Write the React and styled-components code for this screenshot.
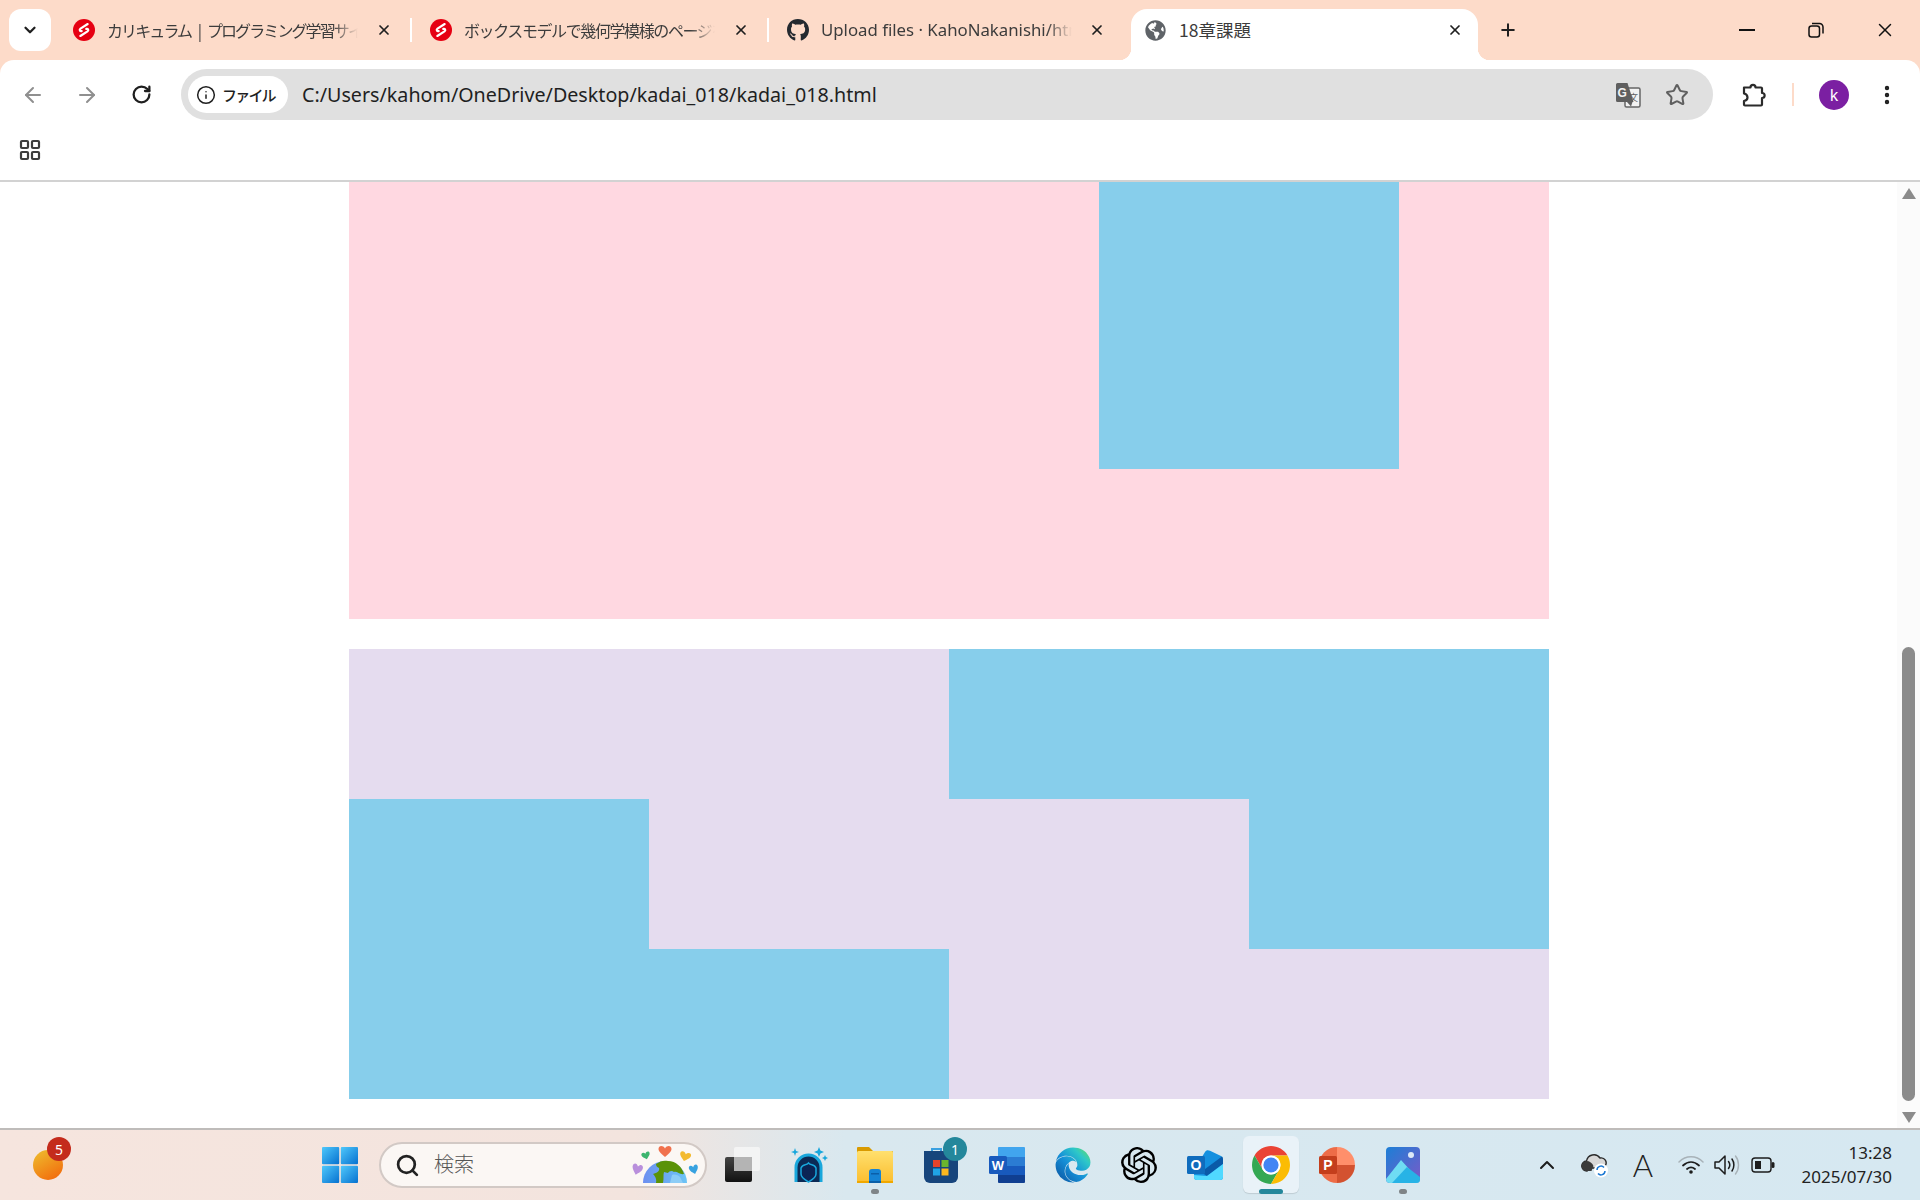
import React from "react";
import styled, { createGlobalStyle } from "styled-components";
import { ArrowLeft, ArrowRight, ChevronDown, ChevronUp, Info, LayoutGrid, MoreVertical, Plus, RotateCw, Search, Star, X } from "lucide-react";
import { FaEdge, FaGithub, FaGlobeAmericas } from "react-icons/fa";
import { SiOpenai } from "react-icons/si";

const GlobalStyle = createGlobalStyle`
  html, body {
    margin: 0;
    padding: 0;
    background: #fff;
  }
  * {
    box-sizing: border-box;
  }
`;

const uiFont = `"Noto Sans", "Noto Sans CJK JP", sans-serif`;
const cjkFont = `"Noto Sans CJK JP", "Noto Sans", sans-serif`;

const Frame = styled.div`
  width: 1920px;
  height: 1200px;
  display: flex;
  flex-direction: column;
  overflow: hidden;
  background: #fddbc9;
  font-family: ${uiFont};
`;

/* tab strip */
const TabStrip = styled.div`
  height: 60px;
  flex: none;
  display: flex;
  align-items: flex-end;
  padding-left: 9px;
`;

const TabMenu = styled.div`
  width: 42px;
  height: 42px;
  margin-bottom: 9px;
  margin-right: 4px;
  border-radius: 12px;
  background: #fff;
  color: #1f1f1f;
  display: flex;
  align-items: center;
  justify-content: center;
`;

const Tab = styled.div`
  position: relative;
  width: ${(p) => p.$width}px;
  height: 51px;
  display: flex;
  align-items: center;
  padding: 0 0 9px ${(p) => (p.$active ? 13 : 18)}px;
  background: ${(p) => (p.$active ? "#fff" : "transparent")};
  border-radius: 16px 16px 0 0;
  color: #3c3c3c;

  ${(p) =>
    p.$divider &&
    `&::after {
      content: "";
      position: absolute;
      right: 0;
      top: 9px;
      width: 2px;
      height: 24px;
      background: #fff;
    }`}

  ${(p) =>
    p.$active &&
    `&::before, &::after {
      content: "";
      position: absolute;
      bottom: 0;
      width: 12px;
      height: 12px;
    }
    &::before {
      left: -12px;
      background: radial-gradient(circle at 0 0, transparent 12px, #fff 12.5px);
    }
    &::after {
      right: -12px;
      background: radial-gradient(circle at 100% 0, transparent 12px, #fff 12.5px);
    }`}
`;

const Favicon = styled.span`
  width: 22px;
  height: 24px;
  flex: none;
  display: flex;
  align-items: center;
  justify-content: center;
  color: ${(p) => p.$color || "#24292f"};
`;

const TabTitle = styled.span`
  flex: none;
  width: ${(p) => p.$width}px;
  margin-left: ${(p) => (p.$active ? 13 : 12)}px;
  font-family: ${(p) => (p.$cjk ? cjkFont : uiFont)};
  font-size: ${(p) => p.$size}px;
  letter-spacing: ${(p) => p.$spacing || 0}px;
  word-spacing: ${(p) => p.$wordGap || 0}px;
  line-height: 24px;
  white-space: nowrap;
  overflow: hidden;
  ${(p) =>
    p.$fade &&
    `mask-image: linear-gradient(90deg, #000 90%, transparent 100%);`}
`;

const CloseButton = styled.span`
  margin-left: auto;
  margin-right: ${(p) => p.$right}px;
  display: flex;
  color: #1f1f1f;
`;

const NewTab = styled.div`
  width: 20px;
  height: 51px;
  margin-left: 20px;
  padding-bottom: 9px;
  display: flex;
  align-items: center;
  color: #1f1f1f;
`;

const WindowControls = styled.div`
  margin-left: auto;
  height: 60px;
  display: flex;
  align-items: center;
  color: #111;
`;

const WindowButton = styled.span`
  width: ${(p) => p.$width}px;
  display: flex;
  justify-content: center;
`;

/* toolbar */
const Toolbar = styled.div`
  height: 60px;
  flex: none;
  display: flex;
  align-items: flex-start;
  padding-top: 9px;
  padding-left: 6px;
  background: #fff;
  border-radius: 14px 14px 0 0;
`;

const NavButton = styled.span`
  width: 54px;
  height: 51px;
  display: flex;
  align-items: center;
  justify-content: center;
  color: ${(p) => (p.$muted ? "#8f8f8f" : "#1f1f1f")};
`;

const AddressBar = styled.div`
  width: 1532px;
  height: 51px;
  margin-left: 13px;
  padding: 0 24px 0 7px;
  display: flex;
  align-items: center;
  border-radius: 26px;
  background: #e0e0e0;
`;

const SchemePill = styled.div`
  width: 100px;
  height: 37px;
  padding-left: 8px;
  display: flex;
  align-items: center;
  gap: 6px;
  border-radius: 19px;
  background: #fff;
  color: #1f1f1f;
  font-family: ${cjkFont};
  font-size: 15px;
  font-weight: 500;
  letter-spacing: -1.8px;
`;

const UrlText = styled.span`
  margin-left: 14px;
  color: #1f1f1f;
  font-size: 19.7px;
  white-space: nowrap;
`;

const AddressIcons = styled.div`
  margin-left: auto;
  display: flex;
  align-items: center;
  gap: 24px;
  color: #5f5f5f;
`;

const ToolbarEnd = styled.div`
  height: 51px;
  display: flex;
  align-items: center;
  color: #1f1f1f;
`;

const ToolIcon = styled.span`
  width: ${(p) => p.$width}px;
  margin-left: ${(p) => p.$left}px;
  display: flex;
  align-items: center;
  justify-content: center;
`;

const ToolDivider = styled.span`
  width: 2px;
  height: 23px;
  margin: 0 25px;
  background: #fddbc9;
`;

const Avatar = styled.span`
  width: 30px;
  height: 30px;
  display: flex;
  align-items: center;
  justify-content: center;
  border-radius: 50%;
  background: #7b1fa2;
  color: #fff;
  font-size: 16px;
`;

const BookmarkBar = styled.div`
  height: 62px;
  flex: none;
  display: flex;
  align-items: center;
  padding-left: 18px;
  background: #fff;
  border-bottom: 2px solid #d2d2d2;
  color: #3c3c3c;
`;

/* page */
const Viewport = styled.div`
  flex: 1;
  min-height: 0;
  display: flex;
  overflow: hidden;
  background: #fff;
`;

const Page = styled.div`
  flex: 1;
  padding-left: 349px;
`;

const PinkBox = styled.div`
  width: 1200px;
  height: 437px;
  display: flex;
  justify-content: flex-end;
  padding: 0 150px 150px 0;
  background: #ffd8e1;
`;

const BlueSquare = styled.div`
  width: 300px;
  height: 287px;
  background: #87ceeb;
`;

const LavenderGrid = styled.div`
  width: 1200px;
  height: 450px;
  margin-top: 30px;
  display: grid;
  grid-template-columns: repeat(4, 300px);
  grid-template-rows: repeat(3, 150px);
  background: #e5dcef;
`;

const BlueCell = styled.div`
  grid-column: ${(p) => p.$col};
  grid-row: ${(p) => p.$row};
  background: #87ceeb;
`;

const Scrollbar = styled.div`
  width: 23px;
  flex: none;
  display: flex;
  flex-direction: column;
  align-items: center;
  padding: 6px 0 5px;
  background: #fbfbfb;
`;

const ScrollArrow = styled.span`
  width: 0;
  height: 0;
  border-left: 7px solid transparent;
  border-right: 7px solid transparent;
  ${(p) => (p.$down ? "border-top" : "border-bottom")}: 11px solid #8b8b8b;
`;

const ScrollThumb = styled.div`
  width: 13px;
  height: 454px;
  margin-top: auto;
  margin-bottom: 11px;
  border-radius: 7px;
  background: #8b8b8b;
`;

/* taskbar */
const Taskbar = styled.div`
  height: 72px;
  flex: none;
  display: flex;
  align-items: center;
  padding: 0 28px 0 15px;
  border-top: 2px solid #bfbcba;
  background: linear-gradient(90deg, #f6e5de 0%, #f3e4de 33%, #d9e8ef 44%, #d6e8f1 100%);
`;

const Slot = styled.div`
  position: relative;
  width: 66px;
  height: 70px;
  flex: none;
  margin-left: ${(p) => p.$left || 0}px;
  display: flex;
  align-items: center;
  justify-content: center;
`;

const ActiveBack = styled.span`
  position: absolute;
  left: 5px;
  top: 6px;
  width: 56px;
  height: 57px;
  border-radius: 6px;
  background: #e9f2f8;
  box-shadow: 0 1px 1px rgba(0, 0, 0, 0.12);
`;

const SlotIcon = styled.span`
  position: relative;
  display: flex;
`;

const Badge = styled.span`
  position: absolute;
  left: ${(p) => p.$left}px;
  top: ${(p) => p.$top}px;
  width: 24px;
  height: 24px;
  display: flex;
  align-items: center;
  justify-content: center;
  border-radius: 50%;
  background: ${(p) => p.$bg};
  color: #fff;
  font-size: 14px;
`;

const RunningDot = styled.span`
  position: absolute;
  left: 50%;
  bottom: 6px;
  width: ${(p) => (p.$active ? 24 : 8)}px;
  height: 5px;
  transform: translateX(-50%);
  border-radius: 3px;
  background: ${(p) => (p.$active ? "#24879b" : "#7f8487")};
`;

const SearchBox = styled.div`
  width: 328px;
  height: 46px;
  margin: 0 3px 0 6px;
  padding: 0 5px 0 14px;
  flex: none;
  display: flex;
  align-items: center;
  border: 2px solid #d2c9c5;
  border-radius: 23px;
  background: #fbf7f4;
  color: #222;
`;

const SearchLabel = styled.span`
  margin: 0 0 3px 14px;
  font-family: ${cjkFont};
  font-size: 20px;
  font-weight: 300;
  color: #555;
`;

const SearchArt = styled.span`
  margin-left: auto;
  display: flex;
`;

const Tray = styled.div`
  margin-left: auto;
  display: flex;
  align-items: center;
  color: #1d1d1d;
`;

const TrayItem = styled.span`
  width: ${(p) => p.$width}px;
  margin-left: ${(p) => p.$left || 0}px;
  display: flex;
  align-items: center;
  justify-content: center;
`;

const ImeLetter = styled.span`
  font-family: Lato, "Noto Sans", sans-serif;
  font-size: 31px;
  font-weight: 300;
  line-height: 36px;
  color: #222;
`;

const Clock = styled.div`
  width: 111px;
  text-align: right;
  font-size: 17px;
  line-height: 24px;
  color: #222;
`;

/* drawings */
const SamuraiIcon = () => (
  <svg width="24" height="24" viewBox="0 0 24 24" fill="none" stroke="#fff" strokeWidth="2.4" strokeLinecap="round">
    <circle cx="12" cy="12" r="12" fill="#e60012" stroke="none" />
    <path d="M16 5.500 8.200 10.500c-1.700 1.300-.6 3.200 1.300 2.700" />
    <path d="M8 18.500l7.800-5c1.700-1.300.6-3.200-1.300-2.700" />
  </svg>
);

const RestoreIcon = () => (
  <svg width="16" height="16" viewBox="0 0 16 16" fill="none" stroke="#111" strokeWidth="1.500">
    <rect x="1" y="4" width="10.500" height="11" rx="2.500" />
    <path d="M4 1.500h7.500a3.500 3.500 0 0 1 3.500 3.500v6.500" />
  </svg>
);

const TranslateIcon = () => (
  <svg width="26" height="26" viewBox="0 0 26 26">
    <rect x="10" y="6" width="15" height="19" rx="1.500" fill="#f2f2f2" stroke="#666" strokeWidth="1.500" />
    <path d="M2.500 1h10l6 19H2.500A1.500 1.500 0 0 1 1 18.500v-16A1.500 1.500 0 0 1 2.500 1z" fill="#5f5f5f" />
    <path d="m12 20 4 4.500 1.500-4.500z" fill="#5f5f5f" />
    <text x="2.500" y="15" fontFamily="Liberation Sans, sans-serif" fontSize="12" fontWeight="700" fill="#f2f2f2">G</text>
    <text x="14" y="18.500" fontFamily="Noto Sans CJK JP, sans-serif" fontSize="9" fill="#5f5f5f">文</text>
  </svg>
);

const ExtensionIcon = () => (
  <svg width="26" height="26" viewBox="0 0 26 26" fill="none" stroke="#2b2b2b" strokeWidth="2.200" strokeLinejoin="round">
    <path d="M3 5.500h6.500c0-3.500 5-3.500 5 0H20a1 1 0 0 1 1 1V11c3.500 0 3.500 5 0 5v6.500a1 1 0 0 1-1 1H4a1 1 0 0 1-1-1V19c3-.5 3.500-2 3.500-3.500S6 12 3 11.500z" />
  </svg>
);

const WindowsLogo = () => (
  <svg width="36" height="36" viewBox="0 0 36 36">
    <defs>
      <linearGradient id="winBlue" x1="0" y1="0" x2="1" y2="1">
        <stop offset="0" stopColor="#4fc8fb" />
        <stop offset="1" stopColor="#0671d0" />
      </linearGradient>
    </defs>
    <rect x="0" y="0" width="17.200" height="17.200" rx="1" fill="url(#winBlue)" />
    <rect x="18.800" y="0" width="17.200" height="17.200" rx="1" fill="url(#winBlue)" />
    <rect x="0" y="18.800" width="17.200" height="17.200" rx="1" fill="url(#winBlue)" />
    <rect x="18.800" y="18.800" width="17.200" height="17.200" rx="1" fill="url(#winBlue)" />
  </svg>
);

const TaskViewIcon = () => (
  <svg width="36" height="36" viewBox="0 0 36 36">
    <defs>
      <linearGradient id="taskDark" x1="0" y1="0" x2="0" y2="1">
        <stop offset="0" stopColor="#444" />
        <stop offset="1" stopColor="#111" />
      </linearGradient>
    </defs>
    <rect x="0" y="10" width="27" height="25" rx="2" fill="url(#taskDark)" />
    <rect x="9" y="0" width="26" height="24" rx="2" fill="#f6f6f6" fillOpacity="0.85" />
    <rect x="9" y="10" width="18" height="14" fill="#b4b4b4" />
  </svg>
);

const ShieldAppIcon = () => (
  <svg width="38" height="36" viewBox="0 0 38 36">
    <path d="M6 35V20.500a12.500 12.500 0 0 1 25 0V35" fill="#0b2a55" stroke="#19a7dc" strokeWidth="3" />
    <path d="M11 21c2-5 5-2 7.500-5 2.500 3 5.500 0 7.500 5v6c0 3-4 6-7.500 8-3.500-2-7.500-5-7.500-8z" fill="#0b2454" stroke="#19a7dc" strokeWidth="1.500" />
    <path d="M5 1l1 3 3 1-3 1-1 3-1-3-3-1 3-1zM29 0l1.400 3.600L34 5l-3.600 1.400L29 10l-1.400-3.600L24 5l3.600-1.400zM35 8l.9 2.100L38 11l-2.100.9L35 14l-.9-2.100L32 11l2.100-.9z" fill="#19a7dc" />
  </svg>
);

const FolderIcon = () => (
  <svg width="36" height="36" viewBox="0 0 36 36">
    <defs>
      <linearGradient id="folderFace" x1="0" y1="0" x2="0" y2="1">
        <stop offset="0" stopColor="#ffe06e" />
        <stop offset="1" stopColor="#fbbd2e" />
      </linearGradient>
    </defs>
    <path d="M1 0h11l4 4h19a1 1 0 0 1 1 1v8H0V1a1 1 0 0 1 1-1z" fill="#d99a00" />
    <rect x="0" y="4" width="36" height="32" rx="1.500" fill="url(#folderFace)" />
    <path d="M12 36v-11a3 3 0 0 1 3-3h6a3 3 0 0 1 3 3v11z" fill="#1583d4" />
    <rect x="12" y="34" width="12" height="2" fill="#0b5fa8" />
    <rect x="0" y="34" width="12" height="2" fill="#f0a800" />
    <rect x="24" y="34" width="12" height="2" fill="#f0a800" />
    <rect x="14" y="26" width="8" height="1.500" fill="#0b5fa8" />
  </svg>
);

const StoreIcon = () => (
  <svg width="36" height="36" viewBox="0 0 36 36">
    <path d="M9 6V2h9v4" fill="none" stroke="#3aa0e0" strokeWidth="2" />
    <path d="M1 4h34v26a6 6 0 0 1-6 6H7a6 6 0 0 1-6-6z" fill="#17457c" />
    <rect x="10" y="13" width="7" height="7" fill="#e5432b" />
    <rect x="18.500" y="13" width="7" height="7" fill="#6ab52d" />
    <rect x="10" y="21.500" width="7" height="7" fill="#20a4e6" />
    <rect x="18.500" y="21.500" width="7" height="7" fill="#fbb71f" />
  </svg>
);

const WordIcon = () => (
  <svg width="36" height="36" viewBox="0 0 36 36">
    <path d="M9 1a1 1 0 0 1 1-1h25a1 1 0 0 1 1 1v9H9z" fill="#41a5ee" />
    <rect x="9" y="10" width="27" height="9" fill="#2b7cd3" />
    <rect x="9" y="19" width="27" height="9" fill="#185abd" />
    <path d="M9 28h27v7a1 1 0 0 1-1 1H10a1 1 0 0 1-1-1z" fill="#103f91" />
    <rect x="0" y="9" width="18" height="18" rx="1.500" fill="#185abd" />
    <text x="9" y="23" textAnchor="middle" fontFamily="Liberation Sans, sans-serif" fontSize="13" fontWeight="700" fill="#fff">W</text>
  </svg>
);

const EdgeIcon = () => (
  <SlotIcon>
    <svg width="0" height="0">
      <defs>
        <linearGradient id="edgeFill" x1="0" y1="1" x2="1" y2="0">
          <stop offset="0" stopColor="#0b4f9c" />
          <stop offset="0.45" stopColor="#1590d8" />
          <stop offset="0.75" stopColor="#2ec8c8" />
          <stop offset="1" stopColor="#6ade55" />
        </linearGradient>
      </defs>
    </svg>
    <FaEdge size={36} fill="url(#edgeFill)" />
  </SlotIcon>
);

const OutlookIcon = () => (
  <svg width="36" height="30" viewBox="0 0 36 30">
    <path d="M7 20 18 2c1-2 3-2.300 5-1.300L34 6c1.500.8 2 2 2 4v17c0 2-1 3-3 3H10c-2 0-3-1-3-3z" fill="#1490df" />
    <path d="M14 22 35 6.500c.7.700 1 2 1 3.500v4L20 26z" fill="#0a5aa8" />
    <path d="M7 25l13 1 16-12v13c0 2-1 3-3 3H10c-2 0-3-1-3-3z" fill="#50d9ff" />
    <rect x="0" y="6" width="18" height="18" rx="1.500" fill="#0f6cbd" />
    <text x="9" y="20" textAnchor="middle" fontFamily="Liberation Sans, sans-serif" fontSize="14" fontWeight="700" fill="#fff">O</text>
  </svg>
);

const ChromeIcon = () => (
  <svg width="38" height="38" viewBox="4 4 40 40">
    <path d="M41.320 14H24a10 10 0 0 0-8.660 15L6.680 14a20 20 0 0 1 34.640 0z" fill="#ea4335" />
    <path d="M6.680 14l8.660 15a10 10 0 0 0 17.320 0L24 44A20 20 0 0 1 6.680 14z" fill="#34a853" />
    <path d="M24 44l8.660-15A10 10 0 0 0 24 14h17.320A20 20 0 0 1 24 44z" fill="#fbbc04" />
    <circle cx="24" cy="24" r="10" fill="#fff" />
    <circle cx="24" cy="24" r="8" fill="#4285f4" />
  </svg>
);

const PowerPointIcon = () => (
  <svg width="36" height="36" viewBox="0 0 36 36">
    <path d="M18 0a18 18 0 0 1 18 18H18z" fill="#ff8f6b" />
    <path d="M18 36a18 18 0 0 0 18-18H18z" fill="#d35230" />
    <path d="M18 0a18 18 0 0 0 0 36z" fill="#ed6c47" />
    <rect x="0" y="9" width="18" height="18" rx="1.500" fill="#c43e1c" />
    <text x="9" y="23" textAnchor="middle" fontFamily="Liberation Sans, sans-serif" fontSize="14" fontWeight="700" fill="#fff">P</text>
  </svg>
);

const PhotosIcon = () => (
  <svg width="34" height="36" viewBox="0 0 34 36">
    <defs>
      <linearGradient id="photoBack" x1="0" y1="0" x2="1" y2="1">
        <stop offset="0" stopColor="#1c7fd6" />
        <stop offset="1" stopColor="#7a5ac8" />
      </linearGradient>
    </defs>
    <rect width="34" height="36" rx="4" fill="url(#photoBack)" />
    <circle cx="25" cy="8" r="3" fill="#dce9f7" />
    <path d="M0 32 15 13l19 21a4 4 0 0 1-4 2H4a4 4 0 0 1-4-4z" fill="#6fdcf3" />
    <path d="M6 36 21 20l13 10v2a4 4 0 0 1-4 4z" fill="#27b3e6" />
  </svg>
);

const heartPath = "M0 5C-3 2-6.500 0-6.500-3-6.500-6.500-2-7 0-3.500 2-7 6.500-6.500 6.500-3 6.500 0 3 2 0 5z";

const SearchEarth = () => (
  <svg width="68" height="38" viewBox="0 0 68 38">
    <defs>
      <linearGradient id="earthSea" x1="0" y1="0" x2="1" y2="0">
        <stop offset="0" stopColor="#6c8ff0" />
        <stop offset="1" stopColor="#6cc4f5" />
      </linearGradient>
    </defs>
    <path d="M11 37a22 22 0 0 1 44 0z" fill="url(#earthSea)" />
    <path d="M24 18c4-3 8-4 12-3 8 0 14 6 16 13-4 1-7-3-10-2-2-2-5-1-6 1l-4-1c-1 3 0 6-1 11h-7c1-4-1-7-3-9 4-1 7-3 6-6-2-1-3-2-3-4z" fill="#5a9208" />
    <path d="M40 29c3-1 6 0 8 2l3 6H38z" fill="#8dcdf6" />
    <path d={heartPath} transform="translate(33 6)" fill="#f0714d" />
    <path d={heartPath} transform="translate(14 10) rotate(-15) scale(.65)" fill="#3cb56f" />
    <path d={heartPath} transform="translate(53 11) rotate(15) scale(.85)" fill="#f3ba2f" />
    <path d={heartPath} transform="translate(5 24) rotate(15) scale(.8 1)" fill="#b98fdc" />
    <path d={heartPath} transform="translate(62 24) rotate(-15) scale(.7 .85)" fill="#38a2e0" />
  </svg>
);

const TrayCloud = () => (
  <svg width="28" height="26" viewBox="0 0 28 26">
    <path d="M6 19a5 5 0 0 1-.5-10A7.500 7.500 0 0 1 19 6a5 5 0 0 1 5 8v2H6z" fill="#d8d8d8" stroke="#2a2a2a" strokeWidth="1.400" />
    <path d="M6 19a5 5 0 0 1-.5-10c3 0 6 2 7 5l-2 5z" fill="#3a3a3a" />
    <circle cx="20" cy="18.500" r="7" fill="#fff" />
    <path d="M16 18a4 4 0 0 1 7-2.500M24 19a4 4 0 0 1-7 2.500" fill="none" stroke="#1776d2" strokeWidth="1.500" />
  </svg>
);

const WifiIcon = () => (
  <svg width="26" height="20" viewBox="0 0 26 20" fill="none" strokeLinecap="round">
    <path d="M1 7c7-7 17-7 24 0" stroke="#a8b2b8" strokeWidth="1.500" />
    <path d="M5 10.500c5-4.500 11-4.500 16 0M9 14c3-2.500 5-2.500 8 0" stroke="#1d1d1d" strokeWidth="1.800" />
    <circle cx="13" cy="17" r="1.800" fill="#1d1d1d" />
  </svg>
);

const SpeakerIcon = () => (
  <svg width="26" height="24" viewBox="0 0 26 24" fill="none" strokeLinejoin="round" strokeLinecap="round">
    <path d="M1 9h4l6-6v18l-6-6H1z" stroke="#1d1d1d" strokeWidth="1.500" />
    <path d="M14.500 8.500c1.500 2 1.500 5 0 7M18 6c2.500 3.500 2.500 8.500 0 12" stroke="#1d1d1d" strokeWidth="1.500" />
    <path d="M21.500 3c4 5 4 13 0 18" stroke="#a8b2b8" strokeWidth="1.400" />
  </svg>
);

const BatteryIcon = () => (
  <svg width="24" height="16" viewBox="0 0 24 16">
    <rect x="1" y="1" width="19" height="14" rx="3" fill="none" stroke="#1d1d1d" strokeWidth="1.400" />
    <rect x="4" y="4" width="6" height="8" fill="#1d1d1d" />
    <rect x="20.500" y="5" width="3" height="6" rx="1.500" fill="#1d1d1d" />
  </svg>
);

const tabs = [
  { id: "curriculum", width: 357, title: "カリキュラム | プログラミング学習サイト", cjk: true, size: 16, spacing: -1.9, wordGap: 5, titleWidth: 251, close: 20, divider: true, icon: <SamuraiIcon /> },
  { id: "box", width: 357, title: "ボックスモデルで幾何学模様のページを作ろう", cjk: true, size: 16, spacing: -1.4, titleWidth: 251, close: 20, divider: true, icon: <SamuraiIcon /> },
  { id: "upload", width: 362, title: "Upload files · KahoNakanishi/html", size: 16.8, titleWidth: 251, close: 26, icon: <FaGithub size={24} /> },
];

const taskApps = [
  { id: "taskview", icon: <TaskViewIcon /> },
  { id: "shield", icon: <ShieldAppIcon /> },
  { id: "folder", icon: <FolderIcon />, running: true },
  { id: "store", icon: <StoreIcon />, badge: "1" },
  { id: "word", icon: <WordIcon /> },
  { id: "edge", icon: <EdgeIcon /> },
  { id: "openai", icon: <SiOpenai size={36} color="#000" /> },
  { id: "outlook", icon: <OutlookIcon /> },
  { id: "chrome", icon: <ChromeIcon />, active: true },
  { id: "powerpoint", icon: <PowerPointIcon /> },
  { id: "photos", icon: <PhotosIcon />, running: true },
];

export default function App() {
  return (
    <Frame>
      <GlobalStyle />
      <TabStrip>
        <TabMenu>
          <ChevronDown size={18} strokeWidth={3} />
        </TabMenu>
        {tabs.map((t) => (
          <Tab key={t.id} $width={t.width} $divider={t.divider}>
            <Favicon>{t.icon}</Favicon>
            <TabTitle $cjk={t.cjk} $size={t.size} $spacing={t.spacing} $wordGap={t.wordGap} $width={t.titleWidth} $fade>
              {t.title}
            </TabTitle>
            <CloseButton $right={t.close}>
              <X size={16} strokeWidth={2.6} />
            </CloseButton>
          </Tab>
        ))}
        <Tab $width={347} $active>
          <Favicon $color="#5f6368">
            <FaGlobeAmericas size={21} />
          </Favicon>
          <TabTitle $cjk $active $size={17.5} $width={200}>18章課題</TabTitle>
          <CloseButton $right={15}>
            <X size={16} strokeWidth={2.6} />
          </CloseButton>
        </Tab>
        <NewTab>
          <Plus size={20} strokeWidth={2.4} />
        </NewTab>
        <WindowControls>
          <WindowButton $width={70}>
            <svg width="16" height="2" viewBox="0 0 16 2"><rect width="16" height="2" fill="#111" /></svg>
          </WindowButton>
          <WindowButton $width={68}>
            <RestoreIcon />
          </WindowButton>
          <WindowButton $width={70}>
            <X size={22} strokeWidth={1.6} />
          </WindowButton>
        </WindowControls>
      </TabStrip>

      <Toolbar>
        <NavButton $muted><ArrowLeft size={24} strokeWidth={2} /></NavButton>
        <NavButton $muted><ArrowRight size={24} strokeWidth={2} /></NavButton>
        <NavButton><RotateCw size={21} strokeWidth={2.6} /></NavButton>
        <AddressBar>
          <SchemePill>
            <Info size={20} strokeWidth={1.8} />
            ファイル
          </SchemePill>
          <UrlText>C:/Users/kahom/OneDrive/Desktop/kadai_018/kadai_018.html</UrlText>
          <AddressIcons>
            <TranslateIcon />
            <Star size={24} strokeWidth={2} />
          </AddressIcons>
        </AddressBar>
        <ToolbarEnd>
          <ToolIcon $width={26} $left={28}><ExtensionIcon /></ToolIcon>
          <ToolDivider />
          <Avatar>k</Avatar>
          <ToolIcon $width={30} $left={23}><MoreVertical size={24} strokeWidth={2.4} /></ToolIcon>
        </ToolbarEnd>
      </Toolbar>

      <BookmarkBar>
        <LayoutGrid size={24} strokeWidth={2.2} />
      </BookmarkBar>

      <Viewport>
        <Page>
          <PinkBox>
            <BlueSquare />
          </PinkBox>
          <LavenderGrid>
            <BlueCell $col="3 / 5" $row="1" />
            <BlueCell $col="4" $row="2" />
            <BlueCell $col="1" $row="2 / 4" />
            <BlueCell $col="2" $row="3" />
          </LavenderGrid>
        </Page>
        <Scrollbar>
          <ScrollArrow />
          <ScrollThumb />
          <ScrollArrow $down />
        </Scrollbar>
      </Viewport>

      <Taskbar>
        <Slot>
          <SlotIcon>
            <svg width="30" height="30" viewBox="0 0 30 30">
              <defs>
                <linearGradient id="weatherSun" x1="0" y1="0" x2="0.6" y2="1">
                  <stop offset="0" stopColor="#eec02f" />
                  <stop offset="1" stopColor="#f2710f" />
                </linearGradient>
              </defs>
              <circle cx="15" cy="15" r="15" fill="url(#weatherSun)" />
            </svg>
            <Badge $left={14} $top={-13} $bg="#c42b1c">5</Badge>
          </SlotIcon>
        </Slot>
        <Slot $left={226}>
          <WindowsLogo />
        </Slot>
        <SearchBox>
          <Search size={25} strokeWidth={2.6} />
          <SearchLabel>検索</SearchLabel>
          <SearchArt><SearchEarth /></SearchArt>
        </SearchBox>
        {taskApps.map((app) => (
          <Slot key={app.id}>
            {app.active && <ActiveBack />}
            <SlotIcon>
              {app.icon}
              {app.badge && <Badge $left={20} $top={-10} $bg="#24879b">{app.badge}</Badge>}
            </SlotIcon>
            {app.running && <RunningDot />}
            {app.active && <RunningDot $active />}
          </Slot>
        ))}
        <Tray>
          <TrayItem $width={48}><ChevronUp size={24} strokeWidth={2} /></TrayItem>
          <TrayItem $width={48}><TrayCloud /></TrayItem>
          <TrayItem $width={48}><ImeLetter>A</ImeLetter></TrayItem>
          <TrayItem $width={36} $left={6}><WifiIcon /></TrayItem>
          <TrayItem $width={36}><SpeakerIcon /></TrayItem>
          <TrayItem $width={36}><BatteryIcon /></TrayItem>
          <Clock>
            <div>13:28</div>
            <div>2025/07/30</div>
          </Clock>
        </Tray>
      </Taskbar>
    </Frame>
  );
}
